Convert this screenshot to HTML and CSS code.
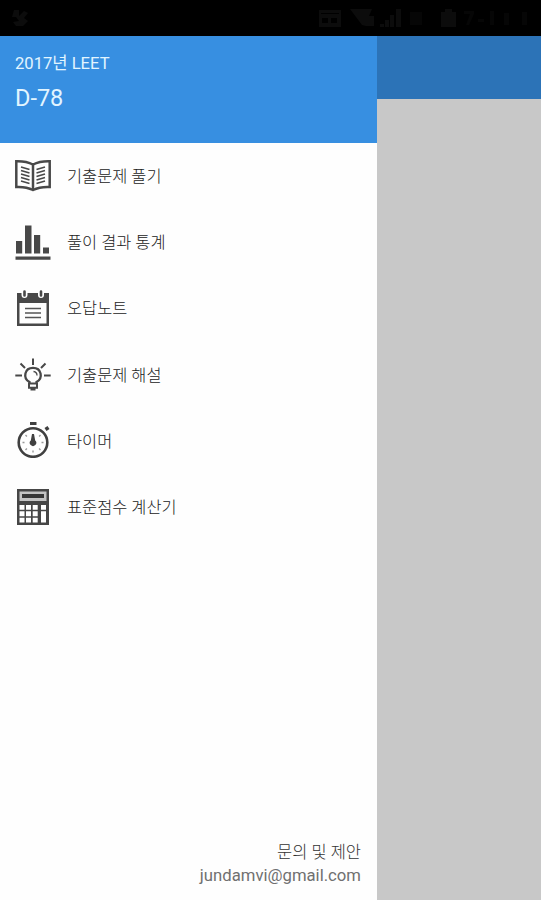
FILE: index.html
```html
<!DOCTYPE html>
<html lang="ko">
<head>
<meta charset="utf-8">
<title>LEET</title>
<link rel="stylesheet" href="styles.css">
</head>
<body>
<div class="screen">
  <div class="status-bar">
    <svg class="status-icon" width="24" height="20" viewBox="0 0 24 20"><path d="M4 2h5v6l5-5 4 2-4 5 4 3-5 5H6l-3-4 6-1-3-4H2z"/></svg>
    <svg class="status-icon" width="241" height="20" viewBox="0 0 241 20"><path fill-rule="evenodd" d="M19 2h22v17H19zM21 5v1h18V5zM22 10v5h6v-5zM31 10v5h6v-5z"/><path d="M50 1h22l-3 7h5v10h-8l-4-1zM80 16h4v3h-4zM85 12h4v7h-4zM90 7h4v12h-4zM96 1h5v18h-5zM141 4h4V1h7v3h4v15h-15z"/><path class="faint" d="M110 4h12v13h-12zM164 3h10v3l-5 11h-3l4-11h-6zM178 11h6v3h-6zM190 3h4v14h-4zM204 5h5v12h-5zM222 4h5v13h-5z"/></svg>
  </div>
  <div class="content">
    <aside class="drawer">
      <header class="drawer-header">
        <div class="exam">2017년 LEET</div>
        <div class="countdown">D-78</div>
      </header>
      <nav class="menu">
        <a class="item">
          <svg class="icon" viewBox="0 0 36 36"><g fill="none" stroke="#484848" stroke-width="2.5"><path d="M1.300 4.300Q11 4 18 7.500Q25 4 34.700 4.300V30Q25 29.500 18 33Q11 29.500 1.300 30Z"/><path d="M18 7.500V32.500"/><path stroke-width="1.700" d="M6 10l8.500 2.500M6 13.500l8.500 2.500M6 17l8.500 2.500M6 20.500l8.500 2.500M6 24l8.500 2.500M30 10l-8.500 2.500M30 13.500l-8.500 2.500M30 17l-8.500 2.500M30 20.500l-8.500 2.500M30 24l-8.500 2.500"/></g></svg>
          <span>기출문제 풀기</span>
        </a>
        <a class="item">
          <svg class="icon" viewBox="0 0 36 36"><path fill="#484848" d="M1 17h6.200v12.500H1zM10 1.500h6.500v28H10zM19 11h6.200v18.500H19zM28 23.500h6v6h-6zM.5 32.500h35v3.300H.5z"/></svg>
          <span>풀이 결과 통계</span>
        </a>
        <a class="item">
          <svg class="icon" viewBox="0 0 36 36"><path fill="#484848" fill-rule="evenodd" d="M2 3h32v33H2zM4.500 13v20.500h27V13z"/><path stroke="#fff" stroke-width="6" stroke-linecap="round" d="M9.500 1v4M26 1v4"/><path stroke="#484848" stroke-width="2.600" stroke-linecap="round" d="M9.500 1.500v4M26 1.500v4"/><path stroke="#555" stroke-width="1.700" d="M10 18.500h16M10 23h16M10 27.500h16"/></svg>
          <span>오답노트</span>
        </a>
        <a class="item">
          <svg class="icon" viewBox="0 0 36 36"><g fill="none" stroke="#484848" stroke-width="2"><path d="M18 2.500v6.500M5.500 7.500l4.500 4.500M30.500 7.500L26 12M.3 19.500H7M29 19.500h6.700"/><path stroke-width="2.300" d="M14.500 28v-2C7.500 22 9.500 11.800 18 11.800s10.500 10.200 3.500 14.200v2"/><path stroke-width="1.300" d="M18.500 15.500q3.500 .5 3.500 4"/><path d="M14 27.500h8v4.300h-8zM15.500 33.500h5"/></g></svg>
          <span>기출문제 해설</span>
        </a>
        <a class="item">
          <svg class="icon" viewBox="0 0 36 36"><circle cx="18" cy="20.500" r="14.300" fill="none" stroke="#404040" stroke-width="2.600"/><path fill="#404040" d="M15 0h6.500v3H15zM29.500 6l3-2L34.500 7l-3 2zM17 12h2l1.200 6.500a3.200 3.200 0 1 1-4.400 0z"/><path stroke="#999" stroke-width="1.400" d="M18 28.500v2M7.500 20.500h2M26.500 20.500h2M10.500 13l1.400 1.400M25.500 13l-1.400 1.400M10.500 28l1.400-1.400M25.500 28l-1.400-1.400"/></svg>
          <span>타이머</span>
        </a>
        <a class="item">
          <svg class="icon" viewBox="0 0 36 36"><path fill="#464646" d="M2 0h32v36H2z"/><path fill="#c4c4c4" d="M4.500 2.500h27v9.500h-27z"/><path fill="#383838" d="M7 5h22v4H7z"/><path fill="#fff" d="M4.500 16h5v4.800h-5zM11 16H16v4.800h-5zM17.700 16h5v4.800h-5zM4.500 22.300h5v4.900h-5zM11 22.300H16v4.900h-5zM17.700 22.300h5v4.900h-5zM4.500 28.800h5v4.700h-5zM11 28.800H16v4.700h-5zM17.700 28.800h5v4.700h-5zM26 16h5v4.800h-5zM26 22.300h5v11.200h-5z"/></svg>
          <span>표준점수 계산기</span>
        </a>
      </nav>
      <footer class="contact">
        <div>문의 및 제안</div>
        <div class="email">jundamvi@gmail.com</div>
      </footer>
    </aside>
    <main class="page"><div class="toolbar"></div></main>
  </div>
</div>
</body>
</html>
```
FILE: styles.css
```css
* { box-sizing: border-box; }
body { margin: 0; font-family: Roboto, "Noto Sans CJK KR", sans-serif; }
.screen { width: 541px; height: 900px; display: flex; flex-direction: column; overflow: hidden; }
.status-bar { height: 36.4px; flex: none; background: #000; display: flex; justify-content: space-between; align-items: center; padding: 0 0 0 10px; }
.status-icon { fill: #0c0c0c; }
.faint { fill: #060606; }
.content { flex: 1; display: flex; min-height: 0; }
.drawer { width: 376.5px; background: #fefefe; display: flex; flex-direction: column; }
.drawer-header { height: 106.2px; flex: none; background: #378fe1; color: #e2f5ff; padding: 15px 15px 0; }
.exam { font-size: 16.6px; line-height: 25px; }
.countdown { font-size: 23.5px; line-height: 30px; margin-top: 7px; }
.menu { flex: 1; }
.item { height: 66.3px; display: flex; align-items: center; gap: 16px; padding-left: 15px; font-size: 16.4px; font-weight: 300; color: #222; white-space: nowrap; }
.item span { margin-top: -2px; }
.icon { width: 36px; height: 36px; flex: none; margin-top: -1px; }
.contact { padding: 0 15.5px 13px 0; text-align: right; font-size: 16.5px; line-height: 22px; font-weight: 300; color: #333; }
.email { font-weight: 400; color: #707070; font-size: 16.7px; line-height: 23px; }
.page { flex: 1; background: #c8c8c8; }
.toolbar { height: 62.5px; background: #2c73b7; }
```
